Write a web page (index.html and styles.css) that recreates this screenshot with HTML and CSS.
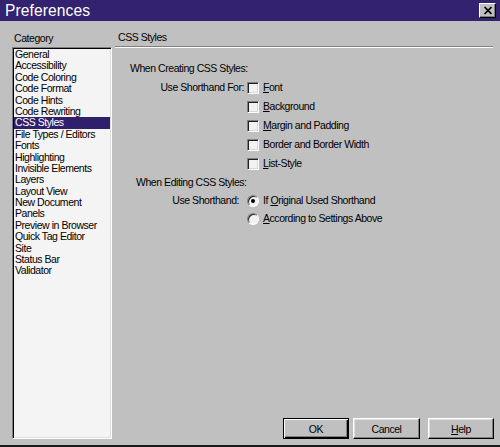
FILE: index.html
```html
<!DOCTYPE html>
<html>
<head>
<meta charset="utf-8">
<title>Preferences</title>
<link rel="stylesheet" href="styles.css">
</head>
<body>
<div class="dialog">
  <div class="titlebar">
    <span class="title">Preferences</span>
    <span class="close">
      <svg width="17" height="15" viewBox="0 0 17 15"><path d="M5 4 L12 11 M12 4 L5 11" stroke="#000" stroke-width="2" fill="none" stroke-linecap="square"/></svg>
    </span>
  </div>
  <div class="body">
    <div class="left">
      <div class="cat-label">Category</div>
      <ul class="list">
        <li>General</li>
        <li>Accessibility</li>
        <li>Code Coloring</li>
        <li>Code Format</li>
        <li>Code Hints</li>
        <li>Code Rewriting</li>
        <li class="selected">CSS Styles</li>
        <li>File Types / Editors</li>
        <li>Fonts</li>
        <li>Highlighting</li>
        <li>Invisible Elements</li>
        <li>Layers</li>
        <li>Layout View</li>
        <li>New Document</li>
        <li>Panels</li>
        <li>Preview in Browser</li>
        <li>Quick Tag Editor</li>
        <li>Site</li>
        <li>Status Bar</li>
        <li>Validator</li>
      </ul>
    </div>
    <div class="right">
      <div class="panel-title">CSS Styles</div>
      <div class="sep"></div>
      <div class="panel">
        <div class="heading heading-create">When Creating CSS Styles:</div>
        <div class="opt-row">
          <span class="opt-label">Use Shorthand For:</span>
          <span class="check"></span>
          <span class="opt-text"><u>F</u>ont</span>
        </div>
        <div class="opt-row">
          <span class="opt-label"></span>
          <span class="check"></span>
          <span class="opt-text"><u>B</u>ackground</span>
        </div>
        <div class="opt-row">
          <span class="opt-label"></span>
          <span class="check"></span>
          <span class="opt-text"><u>M</u>argin and Padding</span>
        </div>
        <div class="opt-row">
          <span class="opt-label"></span>
          <span class="check"></span>
          <span class="opt-text">Border and Border Width</span>
        </div>
        <div class="opt-row">
          <span class="opt-label"></span>
          <span class="check"></span>
          <span class="opt-text"><u>L</u>ist-Style</span>
        </div>
        <div class="heading heading-edit">When Editing CSS Styles:</div>
        <div class="opt-row radio-row">
          <span class="opt-label radio-label">Use Shorthand:</span>
          <span class="radio checked"></span>
          <span class="opt-text">If <u>O</u>riginal Used Shorthand</span>
        </div>
        <div class="opt-row radio-row">
          <span class="opt-label radio-label"></span>
          <span class="radio"></span>
          <span class="opt-text"><u>A</u>ccording to Settings Above</span>
        </div>
      </div>
      <div class="buttons">
        <span class="btn btn-default">OK</span>
        <span class="btn btn-cancel">Cancel</span>
        <span class="btn btn-help"><u>H</u>elp</span>
      </div>
    </div>
  </div>
</div>
</body>
</html>
```
FILE: styles.css
```css
html, body {
  margin: 0;
  padding: 0;
}
body {
  font-family: "Liberation Sans", Arial, sans-serif;
  font-size: 10.5px;
  letter-spacing: -0.45px;
  color: #000;
  background: #c0c0c0;
}
.dialog {
  width: 500px;
  height: 447px;
  box-sizing: border-box;
  background: #c0c0c0;
  border-bottom: 2px solid #1a1a1a;
  display: flex;
  flex-direction: column;
  overflow: hidden;
}
.titlebar {
  height: 21px;
  flex: none;
  background: #33226f;
  display: flex;
  align-items: center;
  justify-content: space-between;
  padding: 0 4px 0 5px;
}
.title {
  color: #fff;
  font-size: 15.6px;
  line-height: 21px;
  letter-spacing: 0.1px;
}
.close {
  width: 17px;
  height: 15px;
  box-sizing: border-box;
  background: #c0c0c0;
  border-top: 1px solid #fff;
  border-left: 1px solid #fff;
  border-right: 1px solid #000;
  border-bottom: 1px solid #000;
  box-shadow: inset -1px -1px #808080;
  display: flex;
  align-items: center;
  justify-content: center;
}
.close svg {
  display: block;
  margin-left: 1px;
}
.body {
  flex: 1;
  display: flex;
  padding: 0 6px 6px 12px;
  min-height: 0;
}
.left {
  width: 100px;
  display: flex;
  flex-direction: column;
}
.cat-label {
  height: 26px;
  box-sizing: border-box;
  padding: 10.5px 0 0 2px;
  line-height: 12px;
}
.list {
  flex: 1;
  margin: 0;
  list-style: none;
  background: #f4f4f4;
  border-top: 1px solid #808080;
  border-left: 1px solid #808080;
  border-right: 1px solid #fff;
  border-bottom: 1px solid #fff;
  box-shadow: inset 1px 1px #000, inset -1px -1px #dfdfdf;
  padding: 1px;
}
.list li {
  line-height: 11.4px;
  height: 11.4px;
  padding-left: 1px;
  white-space: nowrap;
}
.list li.selected {
  background: #2f1f6c;
  color: #fff;
}
.right {
  flex: 1;
  display: flex;
  flex-direction: column;
  padding-left: 3px;
}
.panel-title {
  height: 25px;
  box-sizing: border-box;
  padding: 9.5px 0 0 3px;
  line-height: 12px;
}
.sep {
  height: 1px;
  background: #808080;
  border-bottom: 1px solid #fff;
  margin-right: 1px;
}
.panel {
  flex: 1;
  padding-top: 11.3px;
}
.heading {
  height: 19px;
  line-height: 19px;
}
.heading-create {
  margin-left: 15px;
}
.heading-edit {
  margin-left: 21px;
}
.opt-row {
  display: flex;
  align-items: center;
  height: 19px;
  line-height: 19px;
}
.radio-row {
  height: 17.5px;
  line-height: 17.5px;
}
.opt-label {
  width: 129px;
  text-align: right;
  flex: none;
}
.radio-label {
  width: 124px;
}
.check {
  width: 12px;
  height: 12px;
  box-sizing: border-box;
  margin-left: 3px;
  flex: none;
  background: #f2f2f2;
  border-top: 1px solid #808080;
  border-left: 1px solid #808080;
  border-right: 1px solid #fff;
  border-bottom: 1px solid #fff;
  box-shadow: inset 1px 1px #202020, inset -1px -1px #d8d8d8;
}
.radio {
  width: 12px;
  height: 12px;
  box-sizing: border-box;
  margin-left: 8px;
  flex: none;
  border-radius: 50%;
  background: #f2f2f2;
  border-top: 1px solid #808080;
  border-left: 1px solid #808080;
  border-right: 1px solid #fff;
  border-bottom: 1px solid #fff;
  box-shadow: inset 1px 1px #202020;
  position: relative;
}
.radio.checked::after {
  content: "";
  position: absolute;
  left: 3px;
  top: 3px;
  width: 4px;
  height: 4px;
  border-radius: 50%;
  background: #000;
}
.opt-text {
  margin-left: 4px;
  white-space: nowrap;
}
.buttons {
  display: flex;
  justify-content: flex-end;
  height: 21px;
}
.btn {
  width: 66px;
  height: 21px;
  box-sizing: border-box;
  background: #c0c0c0;
  border-top: 1px solid #fff;
  border-left: 1px solid #fff;
  border-right: 1px solid #000;
  border-bottom: 1px solid #000;
  box-shadow: inset -1px -1px #808080, inset 1px 1px #dfdfdf;
  display: flex;
  align-items: center;
  justify-content: center;
  line-height: 12px;
}
.btn-default {
  border: 1px solid #000;
  box-shadow: inset 1px 1px #fff, inset -1px -1px #000, inset -2px -2px #808080;
}
.btn-cancel {
  width: 67px;
  margin-left: 4px;
}
.btn-help {
  margin-left: 8px;
}
```
